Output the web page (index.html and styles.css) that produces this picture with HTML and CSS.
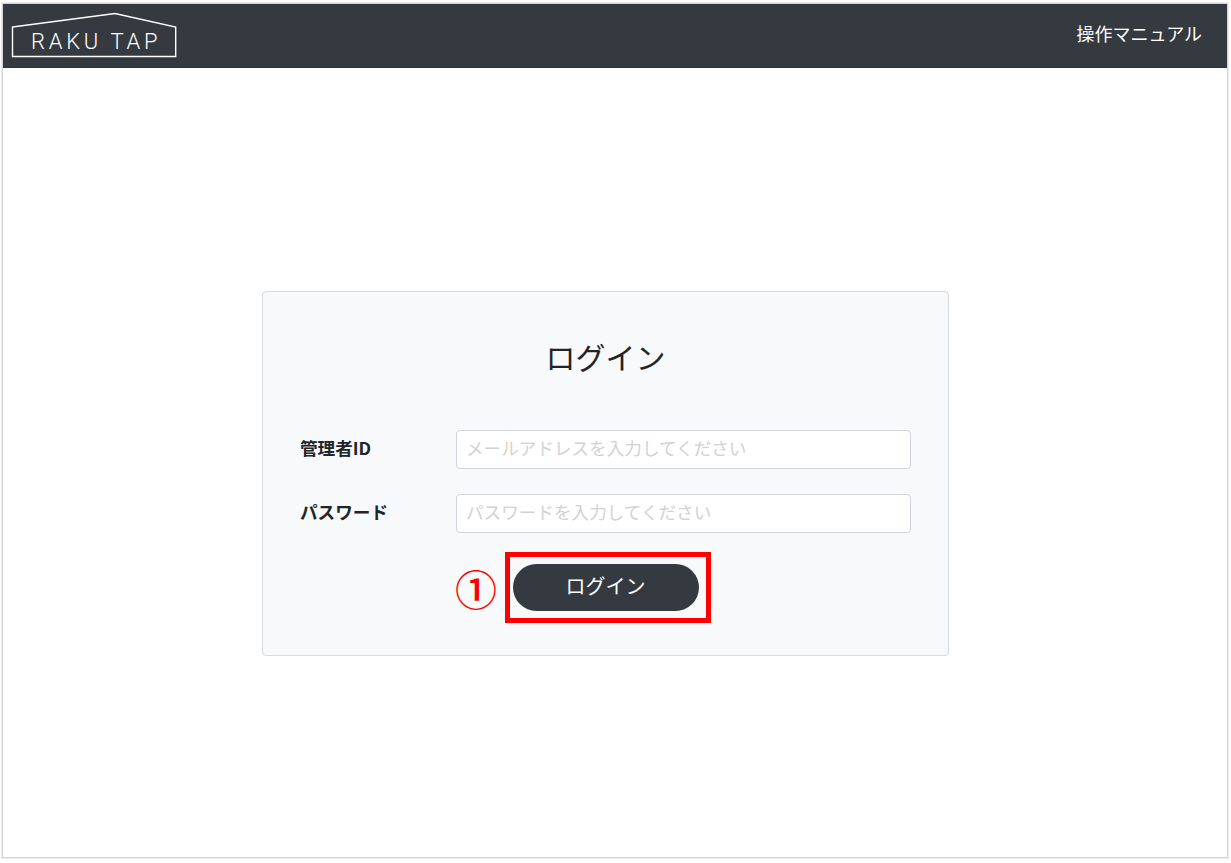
FILE: index.html
```html
<!DOCTYPE html>
<html lang="ja">
<head>
<meta charset="utf-8">
<title>RAKU TAP ログイン</title>
<link rel="stylesheet" href="styles.css">
</head>
<body>
<div class="frame">
  <header class="topbar">
    <svg class="logo" width="166" height="46" viewBox="0 0 166 46" aria-label="RAKU TAP">
      <path class="logo-line" d="M1.5 15 L104 1.5 L164.7 15 V44.5 H1.5 Z"/>
      <text class="logo-text" x="20" y="37">RAKU TAP</text>
    </svg>
    <a class="manual" href="#">操作マニュアル</a>
  </header>
  <main class="main">
    <section class="card">
      <h1 class="title">ログイン</h1>
      <div class="field">
        <label class="label">管理者ID</label>
        <input class="input" type="text" placeholder="メールアドレスを入力してください">
      </div>
      <div class="field">
        <label class="label">パスワード</label>
        <input class="input" type="text" placeholder="パスワードを入力してください">
      </div>
      <div class="actions">
        <button class="btn" type="button">ログイン</button>
        <span class="step">①</span>
        <span class="highlight"></span>
      </div>
    </section>
  </main>
</div>
</body>
</html>
```
FILE: styles.css
```css
* { box-sizing: border-box; }
html, body { height: 100%; }
body {
  margin: 0;
  background: #fff;
  font-family: "Noto Sans CJK JP", "Noto Sans", sans-serif;
  color: #212529;
  padding: 3px 3px 5px 2px;
}
.frame {
  height: 100%;
  border: 1px solid #d4d4d4;
  box-shadow: 0 0 0 1px #eeeeee;
  display: flex;
  flex-direction: column;
}
.topbar {
  height: 64px;
  background: #343a40;
  border-bottom: 1px solid #2c3136;
  display: flex;
  align-items: center;
  justify-content: space-between;
  padding: 0 25px 0 8px;
  flex: none;
}
.logo { display: block; margin-top: -2px; }
.logo-line { fill: none; stroke: #fff; stroke-width: 1.4; }
.logo-text {
  fill: #fff;
  font-family: "Roboto", sans-serif;
  font-weight: 300;
  font-size: 22px;
  letter-spacing: 3.7px;
}
.manual {
  color: #fff;
  font-size: 18px;
  line-height: 27px;
  text-decoration: none;
  margin-top: -4px;
}
.main {
  flex: 1;
  display: flex;
  justify-content: center;
  padding: 223px 19px 0 0;
}
.card {
  width: 687px;
  height: 365px;
  background: #f8f9fa;
  border: 1px solid #d8dbde;
  border-radius: 4px;
  padding: 43px 37px 0;
}
.title {
  margin: 0 0 53px;
  font-size: 30px;
  font-weight: 400;
  line-height: 42px;
  text-align: center;
}
.field {
  display: flex;
  align-items: center;
  height: 39px;
  margin-bottom: 25px;
}
.label {
  width: 156px;
  font-size: 17.6px;
  font-weight: 700;
  flex: none;
  padding-bottom: 5px;
}
.input {
  flex: 1;
  height: 39px;
  min-width: 0;
  border: 1px solid #ced4da;
  border-radius: 4px;
  background: #fff;
  padding: 0 10px 4px 9px;
  font: inherit;
  font-size: 17.6px;
  color: #495057;
}
.input::placeholder { color: #d2d2d2; opacity: 1; }
.actions {
  position: relative;
  display: flex;
  justify-content: center;
  margin-top: 31px;
}
.btn {
  width: 186px;
  height: 47px;
  border: 0;
  border-radius: 24px;
  background: #343a40;
  color: #fff;
  font: inherit;
  font-size: 20px;
  padding: 0 0 4px;
}
.highlight {
  position: absolute;
  left: 205px;
  top: -12px;
  width: 206px;
  height: 71px;
  border: 5px solid #f00;
  pointer-events: none;
}
.step {
  position: absolute;
  left: 155px;
  top: -2px;
  color: #f00;
  font-size: 42px;
  line-height: 52px;
  font-weight: 500;
}
```
